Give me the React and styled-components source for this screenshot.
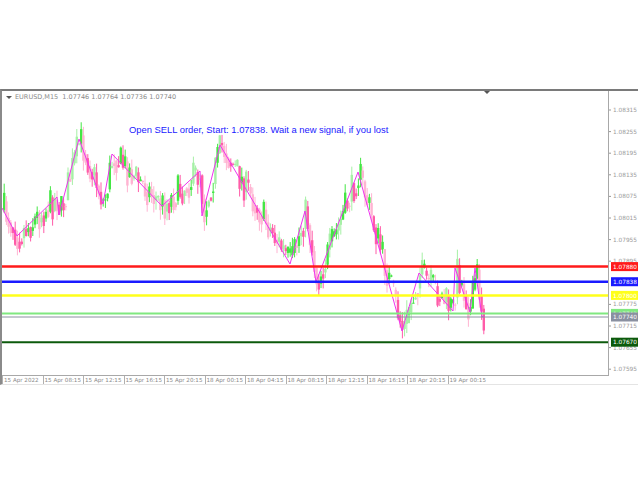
import React from 'react';
import styled, { createGlobalStyle } from 'styled-components';

const Global = createGlobalStyle`
  body { margin: 0; background: #ffffff; font-family: "DejaVu Sans", "Liberation Sans", sans-serif; }
`;

const Page = styled.div`
  width: 640px;
  height: 480px;
  padding-top: 89px;
  box-sizing: border-box;
`;

const Window = styled.div`
  width: 638px;
  height: 296px;
  box-sizing: border-box;
  border-top: 2px solid #7a7a7a;
  border-left: 2px solid #8a8a8a;
  border-bottom: 1px solid #e4e4e4;
  display: grid;
  grid-template-columns: 607px 1fr;
  grid-template-rows: 1fr 8px;
`;

const Plot = styled.div`
  position: relative;
  border-right: 1px solid #a8a8a8;
  border-bottom: 1px solid #a8a8a8;
  overflow: hidden;
`;

const Header = styled.div`
  position: absolute;
  left: 4px;
  top: 2px;
  font-size: 6.5px;
  color: #8a8a8a;
  display: flex;
  gap: 3px;
  align-items: center;
`;

const Arrow = styled.span`
  width: 0;
  height: 0;
  border-left: 3px solid transparent;
  border-right: 3px solid transparent;
  border-top: 3px solid #555;
`;

const TopArrow = styled(Arrow)`
  position: absolute;
  left: 482px;
  top: 0;
`;

const Message = styled.div`
  position: absolute;
  left: 127px;
  top: 33px;
  font-family: "Liberation Sans", Arial, sans-serif;
  font-size: 9.4px;
  color: #1a1aff;
  white-space: nowrap;
`;

const TimeAxis = styled.div`
  display: flex;
  font-size: 5.6px;
  color: #8a8a8a;
  line-height: 8px;
`;

const TimeLabel = styled.div`
  width: 40.5px;
  box-sizing: border-box;
  flex: none;
  border-left: 1px solid #b0b0b0;
  padding-left: 1px;
  white-space: nowrap;
  overflow: hidden;
`;

const ox = 2, oy = 91;
const priceY = p => 110 + (1.08315 - p) * 36000;

const zig = [[2,208],[17,236],[57,197],[59,215],[79,139],[103,204],[112,154],[162,206],[200,171],[202,216],[220,145],[290,264],[305,211],[316,282],[358,172],[402,331],[419,273],[453,311],[455,268],[470,312],[475,268],[482,317],[484,316]];

function zigAt(x) {
  for (let i = 0; i < zig.length - 1; i++) {
    const [x1, y1] = zig[i], [x2, y2] = zig[i + 1];
    if (x >= x1 && x <= x2) return y1 + (y2 - y1) * (x - x1) / (x2 - x1 || 1);
  }
  return zig[zig.length - 1][1];
}

let seed = 7;
const rnd = () => { seed = (seed * 16807) % 2147483647; return seed / 2147483647; };

const candles = [];
let prev = zigAt(3);
for (let x = 3; x <= 484; x += 2.2) {
  const close = zigAt(x) + (rnd() - 0.5) * 34;
  const open = prev;
  const hi = Math.min(open, close) - rnd() * 10;
  const lo = Math.max(open, close) + rnd() * 10;
  candles.push({ x, open, close, hi, lo, light: rnd() > 0.55 });
  prev = close * 0.5 + zigAt(x) * 0.5;
}

const levels = [
  { p: 1.0788, c: '#ff1a1a', w: 2.5, label: '1.07880' },
  { p: 1.07838, c: '#1a1aff', w: 2.5, label: '1.07838' },
  { p: 1.078, c: '#ffff1a', w: 2.5, label: '1.07800' },
  { p: 1.0775, c: '#80e880', w: 2, label: '1.07743' },
  { p: 1.0774, c: '#8a90a0', w: 1, label: '1.07740' },
  { p: 1.0767, c: '#0c5a0c', w: 2, label: '1.07670' },
];

const ticks = ['1.08315','1.08255','1.08195','1.08135','1.08075','1.08015','1.07955','1.07895','1.07775','1.07715','1.07655','1.07595'];

const times = ['15 Apr 2022','15 Apr 08:15','15 Apr 12:15','15 Apr 16:15','15 Apr 20:15','18 Apr 00:15','18 Apr 04:15','18 Apr 08:15','18 Apr 12:15','18 Apr 16:15','18 Apr 20:15','19 Apr 00:15'];

function Chart() {
  return (
    <svg width="606" height="286" style={{ display: 'block' }}>
      <g transform={`translate(${-ox},${-oy})`}>
        {candles.map((c, i) => {
          const up = c.close < c.open;
          const col = up ? (c.light ? '#a6f0a6' : '#44e644') : (c.light ? '#ffb4d2' : '#ff5ca8');
          const top = Math.min(c.open, c.close), h = Math.max(1, Math.abs(c.open - c.close));
          return (
            <g key={i}>
              <line x1={c.x + 1.2} x2={c.x + 1.2} y1={c.hi} y2={c.lo} stroke={col} strokeWidth="1" />
              <rect x={c.x} y={top} width="2.4" height={h} fill={col} />
            </g>
          );
        })}
        <polyline points={zig.map(p => p.join(',')).join(' ')} fill="none" stroke="#ee33ee" strokeWidth="1" />
        {levels.map(l => (
          <line key={l.label} x1="0" x2="610" y1={priceY(l.p)} y2={priceY(l.p)} stroke={l.c} strokeWidth={l.w} />
        ))}
      </g>
    </svg>
  );
}

function PriceAxis() {
  return (
    <svg width="30" height="294" style={{ display: 'block' }}>
      <g transform="translate(-609,-91)" fontFamily="DejaVu Sans, sans-serif" fontSize="5.8">
        {ticks.map(t => {
          const y = priceY(parseFloat(t));
          return (
            <g key={t}>
              <line x1="609" x2="611" y1={y} y2={y} stroke="#999" />
              <text x="613" y={y + 2} fill="#9a9a9a">{t}</text>
            </g>
          );
        })}
        {levels.map(l => {
          const y = priceY(l.p);
          return (
            <g key={l.label}>
              <rect x="611" y={y - 4.5} width="27" height="9" fill={l.c} />
              <text x="613" y={y + 2.2} fill="#fff">{l.label}</text>
            </g>
          );
        })}
      </g>
    </svg>
  );
}

export default function App() {
  return (
    <Page>
      <Global />
      <Window>
        <Plot>
          <Chart />
          <Header><Arrow />EURUSD,M15&nbsp;&nbsp;1.07746 1.07764 1.07736 1.07740</Header>
          <TopArrow />
          <Message>Open SELL order, Start: 1.07838. Wait a new signal, if you lost</Message>
        </Plot>
        <div style={{ gridRow: 'span 2' }}><PriceAxis /></div>
        <TimeAxis>
          {times.map(t => <TimeLabel key={t}>{t}</TimeLabel>)}
        </TimeAxis>
      </Window>
    </Page>
  );
}
